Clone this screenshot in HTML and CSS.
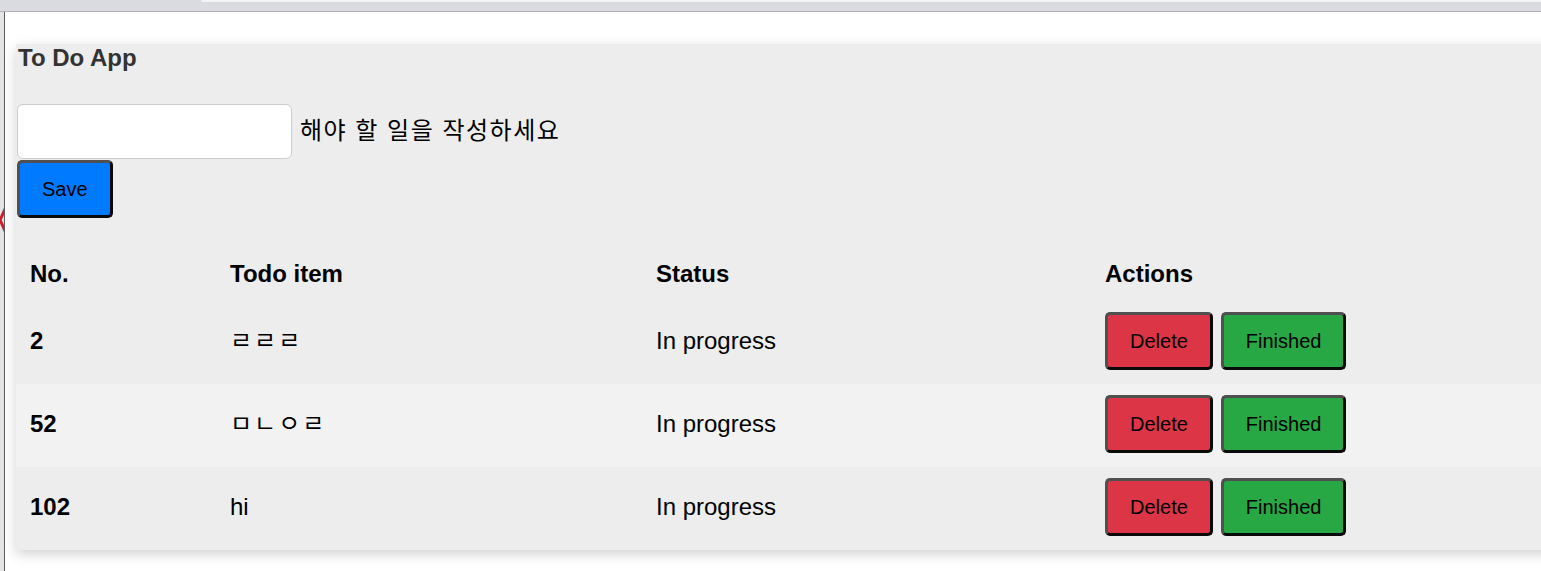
FILE: index.html
```html
<!DOCTYPE html>
<html lang="ko">
<head>
  <meta charset="UTF-8" />
  <meta name="viewport" content="width=device-width, initial-scale=1.0"/>
  <title>To Do App</title>
  <link rel="stylesheet" href="styles.css">
</head>
<body>
  <div class="chrome">
    <div class="tab"></div>
  </div>

  <div class="window">
    <div class="edge">
      <svg class="edge-mark" width="5" height="28" viewBox="0 0 5 28">
        <path d="M6 1 L0 14 L6 27" fill="none" stroke="#cc1f2b" stroke-width="3"/>
      </svg>
    </div>

    <div class="page">
      <div class="card">
        <h1 class="title">To Do App</h1>

        <form class="todo-form" onsubmit="return false">
          <div class="field">
            <input type="text" class="todo-input" id="todoInput" />
            <label for="todoInput">해야 할 일을 작성하세요</label>
          </div>
          <button type="submit" class="btn btn-save">Save</button>
        </form>

        <table class="todo-table">
          <colgroup>
            <col class="col-no">
            <col class="col-item">
            <col class="col-status">
            <col>
          </colgroup>
          <thead>
            <tr>
              <th>No.</th>
              <th>Todo item</th>
              <th>Status</th>
              <th>Actions</th>
            </tr>
          </thead>
          <tbody>
            <tr>
              <td class="num">2</td>
              <td class="jamo">ㄹㄹㄹ</td>
              <td>In progress</td>
              <td>
                <div class="actions">
                  <button class="btn btn-delete">Delete</button>
                  <button class="btn btn-finish">Finished</button>
                </div>
              </td>
            </tr>
            <tr>
              <td class="num">52</td>
              <td class="jamo">ㅁㄴㅇㄹ</td>
              <td>In progress</td>
              <td>
                <div class="actions">
                  <button class="btn btn-delete">Delete</button>
                  <button class="btn btn-finish">Finished</button>
                </div>
              </td>
            </tr>
            <tr>
              <td class="num">102</td>
              <td>hi</td>
              <td>In progress</td>
              <td>
                <div class="actions">
                  <button class="btn btn-delete">Delete</button>
                  <button class="btn btn-finish">Finished</button>
                </div>
              </td>
            </tr>
          </tbody>
        </table>
      </div>
    </div>
  </div>
</body>
</html>
```

FILE: styles.css
```css
* {
  box-sizing: border-box;
}

html, body {
  margin: 0;
  height: 100%;
  overflow: hidden;
  background: #fff;
  font-family: "Liberation Sans", Arial, "Noto Sans CJK KR", sans-serif;
}

/* browser frame bits */
.chrome {
  height: 12px;
  background: #dadbe0;
  border-bottom: 1px solid #b3b3b8;
  display: flex;
}

.tab {
  margin-left: 201px;
  flex: 1;
  height: 2px;
  background: #f4f4f6;
  border-bottom-left-radius: 6px;
}

.window {
  display: flex;
  height: calc(100% - 12px);
}

.edge {
  width: 5px;
  flex-shrink: 0;
  background: #e4e4e4;
  border-right: 1px solid #5c5c5c;
  overflow: hidden;
}

.edge-mark {
  display: block;
  margin-top: 194px;
}

.page {
  flex: 1;
  padding: 32px 0 0 11px;
  overflow: hidden;
}

/* app */
.card {
  width: 1620px;
  background: #ededed;
  box-shadow: 0 4px 12px rgba(0, 0, 0, 0.18);
}

.title {
  margin: 0 0 0 2px;
  font-size: 24px;
  line-height: 28px;
  color: #333;
}

.todo-form {
  margin-top: 32px;
  display: flex;
  flex-direction: column;
  align-items: flex-start;
  padding-left: 1px;
}

.field {
  display: flex;
  align-items: center;
}

.todo-input {
  width: 275px;
  height: 55px;
  border: 1px solid #ccc;
  border-radius: 6px;
  background: #fff;
  font-size: 20px;
  padding: 0 10px;
}

.field label {
  margin: 0 0 7px 8px;
  font-size: 24px;
  letter-spacing: 1.5px;
  color: #000;
}

.btn {
  height: 58px;
  padding: 0 22px;
  border: 3px solid;
  border-color: #505050 #0a0a0a #0a0a0a #505050;
  border-radius: 5px;
  font-family: "Liberation Sans", Arial, sans-serif;
  font-size: 20px;
  color: #000;
  cursor: pointer;
}

.btn-save {
  margin-top: 1px;
  background: #007bff;
}

.btn-delete {
  background: #dc3545;
}

.btn-finish {
  background: #28a745;
}

.todo-table {
  margin-top: 31px;
  width: 100%;
  border-collapse: collapse;
  table-layout: fixed;
  font-size: 24px;
  color: #000;
}

.col-no { width: 200px; }
.col-item { width: 426px; }
.col-status { width: 449px; }

.todo-table th {
  text-align: left;
  padding: 11px 14px 13px;
  line-height: 28px;
}

.todo-table td {
  padding: 11px 14px 14px;
  line-height: 28px;
}

.todo-table .jamo {
  letter-spacing: 2px;
}

.todo-table tbody tr:nth-child(even) {
  background: #f2f2f2;
}

.todo-table .num {
  font-weight: bold;
}

.actions {
  display: flex;
  gap: 8px;
}
```
